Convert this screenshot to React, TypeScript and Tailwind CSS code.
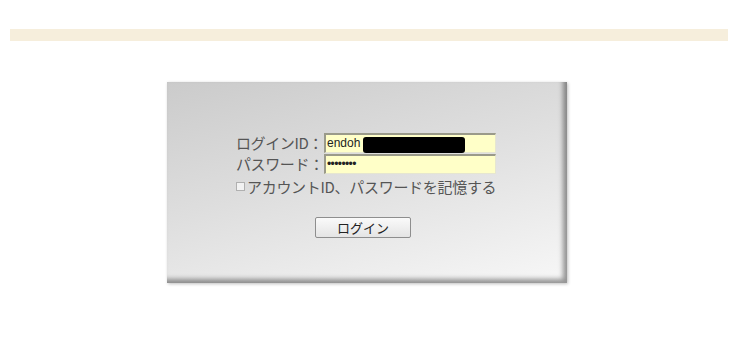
import React from "react";

export default function App() {
  const jp = { fontFamily: '"Noto Sans CJK JP", "Liberation Sans", sans-serif' } as React.CSSProperties;
  return (
    <div className="w-[734px] h-[357px] bg-white overflow-hidden" style={jp}>
      <div className="pt-[29px] pl-[10px] pr-[6px]">
        <div className="h-[12px] bg-[#f6eedc]" />
      </div>
      <div className="flex justify-center pt-[41px]">
        <div className="w-[400px] h-[201px] bg-[linear-gradient(165deg,#cbcbcb_0%,#dedede_45%,#f7f7f7_100%)] shadow-[inset_-4px_-4px_5px_rgba(0,0,0,0.4),1px_1px_3px_rgba(0,0,0,0.25)] pt-[50px] flex flex-col items-center text-[#555] text-[15px] leading-none">
          <div className="w-[260px] flex flex-col mr-[2px]">
            <div className="flex items-center h-[21px]">
              <div className="w-[88px] shrink-0 text-right pr-[2px] tracking-[-0.4px] whitespace-nowrap">ログインID：</div>
              <div className="relative w-[172px] shrink-0 h-[20px] bg-[#ffffc8] border-t-2 border-l-2 border-t-[#9a9a8a] border-l-[#9a9a8a] border-b border-r border-b-[#e6e6d0] border-r-[#e6e6d0] flex items-center pl-[1px]">
                <span className="text-[12px] text-[#222]" style={{ fontFamily: '"Liberation Sans", Arial, sans-serif' }}>endoh</span>
                <div className="absolute left-[37px] top-[2px] w-[102px] h-[16px] bg-black rounded-[3px]" />
              </div>
            </div>
            <div className="flex items-center h-[21px]">
              <div className="w-[88px] shrink-0 text-right pr-[2px] tracking-[-0.4px] whitespace-nowrap">パスワード：</div>
              <div className="w-[172px] shrink-0 h-[20px] bg-[#ffffc8] border-t-2 border-l-2 border-t-[#9a9a8a] border-l-[#9a9a8a] border-b border-r border-b-[#e6e6d0] border-r-[#e6e6d0] flex items-center pl-[1px]">
                <span className="text-[12px] text-[#222] tracking-[-0.6px]" style={{ fontFamily: '"Liberation Sans", Arial, sans-serif' }}>••••••••</span>
              </div>
            </div>
            <div className="flex items-center h-[22px] mt-[1px]">
              <div className="w-[9px] h-[9px] shrink-0 border border-[#b0b0b0] bg-[#f2f2f2] mr-[2px] mt-[1px]" />
              <span className="tracking-[-0.3px] whitespace-nowrap">アカウントID、パスワードを記憶する</span>
            </div>
          </div>
          <button className="mt-[20px] w-[96px] h-[21px] border border-[#8e8e8e] rounded-[2px] bg-[linear-gradient(#fafafa,#e4e4e4)] text-[13px] text-[#222] flex items-center justify-center mr-[8px]">
            ログイン
          </button>
        </div>
      </div>
    </div>
  );
}
